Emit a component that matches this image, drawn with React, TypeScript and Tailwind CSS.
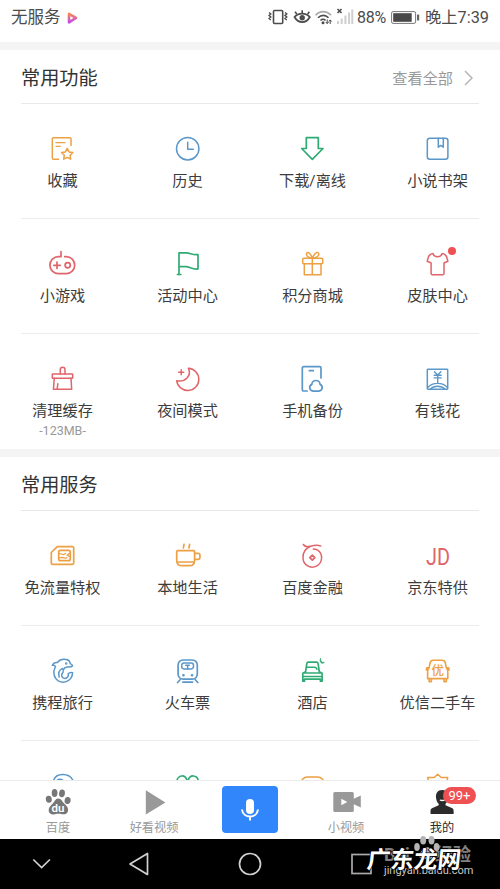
import type { ReactNode } from "react";

const BLUE = "#5b97c9";
const ORANGE = "#eda044";
const RED = "#e0656b";
const GREEN = "#2fab74";

type Item = { label: string; color: string; icon: ReactNode; note?: string; dot?: boolean };

const FEATURES: Item[][] = [
  [
    {
      label: "收藏",
      color: ORANGE,
      icon: (
        <>
          <path d="M24.5 12.5V6a1.3 1.3 0 0 0-1.3-1.3H7.1A1.3 1.3 0 0 0 5.8 6v19a1.3 1.3 0 0 0 1.3 1.3h5" />
          <path d="M9.5 9.7h9M9.5 13.3h4.3" strokeWidth="1.3" />
          <path d="M20.7 15.4l1.8 3.5 3.9.6-2.8 2.8.6 3.9-3.5-1.8-3.5 1.8.6-3.9-2.8-2.8 3.9-.6z" />
        </>
      ),
    },
    {
      label: "历史",
      color: BLUE,
      icon: (
        <>
          <circle cx="16.2" cy="15.7" r="11.2" />
          <path d="M16.2 9.3v7h5.6" />
        </>
      ),
    },
    {
      label: "下载/离线",
      color: GREEN,
      icon: <path d="M9.8 4.7h12v10.8h4.7L15.8 26.3 5.2 15.5h4.6z" strokeWidth="1.7" />,
    },
    {
      label: "小说书架",
      color: BLUE,
      icon: (
        <>
          <rect x="5.8" y="5.3" width="20.6" height="21" rx="2.5" />
          <path d="M16.8 5.3v8.9l2.5-1.8 2.5 1.8V5.3" />
        </>
      ),
    },
  ],
  [
    {
      label: "小游戏",
      color: RED,
      icon: (
        <>
          <path d="M14.5 3.7v5h-2.6a8.5 8.5 0 0 0 0 17h7.8a8.5 8.5 0 0 0 0-17h-1.5" strokeWidth="1.7" />
          <path d="M7.3 17.3h6.4M10.5 14.1v6.4" strokeWidth="1.7" />
          <circle cx="21.2" cy="17.3" r="2.6" strokeWidth="1.7" />
        </>
      ),
    },
    {
      label: "活动中心",
      color: GREEN,
      icon: (
        <>
          <path d="M7.5 26.3V4.9H15c4 0 5 2.2 11.5 1.7V21c-6.5.5-8-2.3-12-2.3h-7" strokeWidth="1.7" />
          <path d="M5.8 26.5h3.7" />
        </>
      ),
    },
    {
      label: "积分商城",
      color: ORANGE,
      icon: (
        <>
          <rect x="6.2" y="10.3" width="20" height="5.4" rx="1" />
          <path d="M7.8 15.7v11h16.7v-11M15.8 10.3v16.4" />
          <path d="M15.8 10.2c-2.5 0-5.8-1.5-5.8-4s3-3.3 5.8 4zM15.8 10.2c2.5 0 6.5-1.5 6.5-4s-3.3-3.3-6.5 4z" />
        </>
      ),
    },
    {
      label: "皮肤中心",
      color: RED,
      dot: true,
      icon: (
        <path d="M11.5 5.5c.9 4.2 8.2 4.2 9.1 0 2.6.4 3.9 1.6 4.500 3.300l1.300 4.400-3.900 1.800v10.400a1.300 1.300 0 0 1-1.300 1.300H10.900a1.300 1.300 0 0 1-1.300-1.300V15l-3.900-1.800L7 8.800c.6-1.700 1.900-2.900 4.500-3.300z" />
      ),
    },
  ],
  [
    {
      label: "清理缓存",
      color: RED,
      note: "-123MB-",
      icon: (
        <>
          <path d="M13.8 11V6.5a2.35 2.35 0 0 1 4.7 0V11" />
          <rect x="5.8" y="11" width="20.4" height="4.3" rx="0.6" />
          <path d="M7.8 15.3l-.9 11h18.3l-.7-11M10.7 25.8l.6-5" />
        </>
      ),
    },
    {
      label: "夜间模式",
      color: RED,
      icon: (
        <>
          <path d="M16.9 5.3A11.1 11.1 0 1 1 5.2 17.7c8.5 1.8 15.2-4.900 11.700-12.400z" />
          <path d="M7.2 9.3h5M9.7 6.8v5" />
        </>
      ),
    },
    {
      label: "手机备份",
      color: BLUE,
      icon: (
        <>
          <path d="M24.5 15V5a1.3 1.3 0 0 0-1.3-1.3H7.1A1.3 1.3 0 0 0 5.8 5v21.7A1.3 1.3 0 0 0 7.1 28h3.6M12.8 7.7h4" strokeWidth="1.7" />
          <path d="M16.5 28.1a3.500 3.500 0 0 1-1.200-6.700c.5-5.200 7.800-5.200 8.300 0a3.500 3.500 0 0 1-1.200 6.700z" strokeWidth="1.7" />
        </>
      ),
    },
    {
      label: "有钱花",
      color: BLUE,
      icon: (
        <>
          <rect x="5.8" y="6.3" width="20.4" height="20" rx="0.7" />
          <path d="M13 8.8l3.200 3.300 3.200-3.300M12.700 12.200h7M12.700 14.900h7M16.200 12v8M6.200 24.500c5-5.500 15-5.500 19.700 0M9 26c3-3.700 11-3.700 14.300 0" strokeWidth="1.4" />
        </>
      ),
    },
  ],
];

const SERVICES: Item[][] = [
  [
    {
      label: "免流量特权",
      color: ORANGE,
      icon: (
        <g transform="translate(0 -1)">
          <path d="M10.8 7.7h15a1.400 1.400 0 0 1 1.400 1.400v14.800a1.400 1.400 0 0 1-1.400 1.400H6.200a1.400 1.400 0 0 1-1.400-1.400V13.500z" strokeWidth="1.7" />
          <rect x="12.2" y="11.3" width="11.6" height="10.4" rx="1.8" strokeWidth="1.7" />
          <path d="M12.5 14.3l4.500 1.400 2-1.200M23.500 14l-3 2.300 3 1.300M12.500 18.800l3.700-.4 2.500.9 1.500-.7" strokeWidth="1.2" />
        </g>
      ),
    },
    {
      label: "本地生活",
      color: ORANGE,
      icon: (
        <g transform="translate(0 -1)" strokeWidth="1.7">
          <path d="M6.3 11.7h15.800a1 1 0 0 1 1 1v8.200c0 3.600-2.200 5.800-5.200 5.800h-7.500c-3 0-5.200-2.200-5.200-5.800v-8.200a1 1 0 0 1 1.100-1zM7 23h14.500" />
          <path d="M23.2 14.3h3.500a1.700 1.700 0 0 1 1.700 1.700v2.600a1.700 1.700 0 0 1-1.700 1.700h-3.500M12.500 5.300l-.6 3.600M18.100 5.300l-.6 3.600" />
        </g>
      ),
    },
    {
      label: "百度金融",
      color: RED,
      icon: (
        <g transform="translate(0 -1)">
          <path d="M6.8 5.5c1.500 2.300 4.200 2.600 7.400 1.700 3.500-1 6.500-1.500 10-.3" />
          <path d="M13.5 7.5C9.500 9.200 6.500 13 6.500 18.500a9.300 9.300 0 1 0 14.700-7.300c-1.400-.9-2.800-1.300-4.400-1.300" />
          <path d="M15.8 16.2l2.500 2.500-2.500 2.500-2.500-2.500z" strokeWidth="1.7" />
        </g>
      ),
    },
    {
      label: "京东特供",
      color: RED,
      icon: (
        <text x="4.6" y="24.7" fontSize="24" fontFamily="Roboto" textLength="24" lengthAdjust="spacingAndGlyphs" fill="currentColor" stroke="none">
          JD
        </text>
      ),
    },
  ],
  [
    {
      label: "携程旅行",
      color: BLUE,
      icon: (
        <>
          <path d="M6 10.3c.8-2.300 2.600-3 4.900-2.800C13 4.700 16.500 4 19.800 4.600c2.400.5 3.700 2 3.900 4 1.300.5 2.300 1.300 2.300 2.400-1 1.200-3.500 1-5.500.9-2 .3-3 1.200-3.400 2.600" />
          <path d="M6 10.300c1.400-.2 2.500.1 3 1.200-3 5.500-1.700 11.500 2.700 14.300 5.700 3.200 14 .2 14.400-8.100-1.700-.6-3.200-.2-4.400 1 .7 2.500-1 4.700-3.400 4.700-3.200 0-4.200-4-1.800-6 .8-1.400.5-2.800-.5-4-3.200 1.600-4.400 5-3.300 8.600" />
          <circle cx="19.7" cy="8.5" r=".5" />
        </>
      ),
    },
    {
      label: "火车票",
      color: BLUE,
      icon: (
        <>
          <rect x="6.6" y="5" width="19.2" height="19.2" rx="5" strokeWidth="1.7" />
          <rect x="10.2" y="7.9" width="11.8" height="6" rx="2.3" />
          <path d="M14.3 10.2h3.500M16.100 10.200v3.500" />
          <path d="M11.9 20.3h.1M20.500 20.300h.1" strokeWidth="2.6" />
          <path d="M8.6 24.7l-2.500 2.800M23.800 24.700l2.500 2.800M11.300 27.100h9.800" strokeWidth="1.7" />
        </>
      ),
    },
    {
      label: "酒店",
      color: GREEN,
      icon: (
        <>
          <path d="M6.3 26.2v-7.900l2.800-1.600 1.200-8a1.700 1.700 0 0 1 1.700-1.500h7.900a1.700 1.700 0 0 1 1.700 1.500l1.200 8 2.800 1.600v7.900h-1.700v-2H8v2zM6.500 18h19M6.500 21.500h19" strokeWidth="1.7" />
          <path d="M10.7 12.3h7.500c1.400.1 2 .8 2.300 1.900" />
          <path d="M24 3.5c-.3 2.300 1 4.100 3.900 4-2.700 2.200-5.500-.8-3.900-4z" fill="currentColor" strokeWidth="0.7" />
        </>
      ),
    },
    {
      label: "优信二手车",
      color: ORANGE,
      icon: (
        <>
          <path d="M7.6 12.8l1-5.100c.4-1.700 1.500-2.400 3.200-2.400h8.800c1.700 0 2.800.7 3.200 2.400l1 5.100c1.100 1 1.500 2.300 1.500 4v6.800H6.100v-6.800c0-1.700.4-3 1.500-4zM7.600 23.800v2.800h2.300v-2.800M22.500 23.800v2.800h2.300v-2.800M7.400 12.800H5.200l-.4 2 1.500.8M25 12.800h2.200l.4 2-1.500.8" strokeWidth="1.6" />
          <text x="16.2" y="20.2" fontSize="12.5" fontWeight="500" textAnchor="middle" fill="currentColor" stroke="none">
            优
          </text>
        </>
      ),
    },
  ],
  // only the top edge of this row shows above the tab bar
  [
    { label: "", color: BLUE, icon: <path d="M7 10.5C9.500 3 22.500 2.300 26.500 10.500M10.500 10.500c1.500-1.500 3.500-1.500 5.500-.5" /> },
    {
      label: "",
      color: GREEN,
      icon: <path d="M5.3 12.5c0-8.500 9.900-8.500 10.200-1.200M16.700 11.300c.3-7.300 10-7.300 10.200 1.200" strokeWidth="1.7" />,
    },
    { label: "", color: ORANGE, icon: <rect x="4.8" y="7" width="22.5" height="20" rx="6" strokeWidth="1.7" /> },
    {
      label: "",
      color: ORANGE,
      icon: <path d="M7.5 14L6.200 7.500h6.500l3.500-3.200 3.500 3.200h6.500L25 14" />,
    },
  ],
];

function Grid({ rows }: { rows: Item[][] }) {
  return (
    <div className="-mt-px">
      {rows.map((row, i) => (
        <div key={i} className="relative flex h-[115px]">
          {i > 0 && <div className="absolute inset-x-[21px] top-0 h-px bg-[#ececec]" />}
          {row.map((item, j) => (
            <div key={j} className="flex w-1/4 flex-col items-center pt-[30px]">
              <div className="relative">
                <svg
                  width="32"
                  height="32"
                  viewBox="0 0 32 32"
                  fill="none"
                  stroke="currentColor"
                  strokeWidth="1.5"
                  strokeLinecap="round"
                  strokeLinejoin="round"
                  className="-translate-x-[0.5px] overflow-visible"
                  style={{ color: item.color }}
                >
                  {item.icon}
                </svg>
                {item.dot && <span className="absolute -top-px left-[26px] size-2 rounded-full bg-[#ef5052]" />}
              </div>
              <span className="mt-1 text-[15.2px] leading-6 whitespace-nowrap text-[#3c3c3c]">{item.label}</span>
              {item.note && <span className="text-[12.5px] leading-4 text-[#999]">{item.note}</span>}
            </div>
          ))}
        </div>
      ))}
    </div>
  );
}

function StatusBar() {
  return (
    <header className="flex h-[42px] items-start justify-between px-[11px] pt-[6px] text-[#4c4c4c]">
      <div className="flex items-center">
        <span className="text-[16.5px] leading-6">无服务</span>
        <svg width="11" height="12" viewBox="0 0 11 12" className="ml-[6px]">
          <defs>
            <linearGradient id="play" x1="0" y1="0" x2="0" y2="1">
              <stop offset="0" stopColor="#f58a52" />
              <stop offset="1" stopColor="#c44ce8" />
            </linearGradient>
          </defs>
          <path d="M2 1.8l7 4-7 4.5z" fill="#fff" stroke="url(#play)" strokeWidth="2.6" strokeLinejoin="round" />
        </svg>
      </div>
      <div className="flex items-center">
        <svg width="86" height="18" viewBox="0 0 86 18" fill="none" stroke="currentColor" className="-mt-[2px]">
          {/* vibrate */}
          <rect x="5.5" y="2.5" width="9.2" height="13" rx="1" strokeWidth="1.6" />
          <path d="M1 4.5l1.800 1.500L1 7.500 2.800 9 1 10.500 2.800 12M17 4.500l1.800 1.500L17 7.500 18.800 9 17 10.500l1.800 1.500" strokeWidth="1.4" />
          {/* eye */}
          <path d="M26.5 9c4 6.800 11.500 6.800 15.300 0-4-4.500-11.300-4.500-15.300 0z" strokeWidth="1.8" />
          <circle cx="34.2" cy="9.8" r="2.7" fill="currentColor" stroke="none" />
          <path d="M28.8 6L27 3.800M34.200 5V2.200M39.600 6l1.800-2.200" strokeWidth="1.6" />
          {/* wifi */}
          <path d="M47.5 7.2c4.500-4.800 11-4.800 15.500 0" stroke="#a8a8a8" strokeWidth="1.6" />
          <path d="M50 9.8c3.200-3.200 7.500-3.200 10.500 0M52.500 12.500c1.600-1.600 3.600-1.600 5 0" strokeWidth="1.6" />
          <circle cx="55" cy="14.8" r="1.5" fill="currentColor" stroke="none" />
          <path d="M59.2 11.5v4M57.800 14l1.400 1.600 1.400-1.600M62.200 16v-4M60.800 13.500l1.400-1.600 1.400 1.600" strokeWidth="1" />
          {/* signal */}
          <path d="M69.5 1l4 4M73.500 1l-4 4" strokeWidth="1.6" />
          <path d="M70 13v3M73.700 10.500V16M77.400 7.500V16M81.100 4.500V16M84.300 1.500V16" stroke="#cfcfcf" strokeWidth="2" />
        </svg>
        <span className="ml-[3px] font-[Roboto] text-base leading-6 tracking-[-0.2px]">88%</span>
        <svg width="29" height="13" viewBox="0 0 29 13" className="-mt-[2px] ml-[5px]">
          <rect x=".6" y=".6" width="24" height="11.8" rx="1.5" fill="none" stroke="#777" strokeWidth="1" />
          <rect x="2.2" y="2.2" width="18.5" height="8.6" fill="#484848" />
          <rect x="26" y="3.5" width="2.2" height="6" rx=".5" fill="#666" />
        </svg>
        <span className="ml-[5px] text-[16.3px] leading-6 whitespace-nowrap">晚上7:39</span>
      </div>
    </header>
  );
}

function Section({ title, more, rows }: { title: string; more?: string; rows: Item[][] }) {
  return (
    <section className="border-t-8 border-[#f4f4f4] pb-px">
      <div className="mx-[21px] flex h-[54px] items-center justify-between border-b border-[#e8e8e8] pt-[5px]">
        <h2 className="text-[19.2px] text-[#333]">{title}</h2>
        {more && (
          <div className="flex items-center gap-[11px] pr-[6px] text-[15.2px] text-[#999]">
            {more}
            <svg width="9" height="16" viewBox="0 0 9 16" fill="none" stroke="#b5b5b5" strokeWidth="1.5" className="-mt-[2px]">
              <path d="M1 1l7 7-7 7" />
            </svg>
          </div>
        )}
      </div>
      <Grid rows={rows} />
    </section>
  );
}

function Tab({ label, active, children }: { label: string; active?: boolean; children: ReactNode }) {
  return (
    <div className={`relative flex w-24 flex-col items-center pt-[5px] ${active ? "text-[#2b2b2b]" : "text-[#999]"}`}>
      <svg width="32" height="32" viewBox="0 0 32 32" fill="currentColor">
        {children}
      </svg>
      <span className="mt-px text-[12.2px] leading-[19px]">{label}</span>
      {active && (
        <span className="absolute top-[6px] left-[49px] flex h-[17px] w-[33px] items-center justify-center rounded-full bg-[#ef5052] text-[13px] text-white">
          99+
        </span>
      )}
    </div>
  );
}

function TabBar() {
  return (
    <nav className="flex h-[59px] justify-center border-t border-[#ebebeb] bg-white">
      <Tab label="百度">
        <g fill="#777">
          <ellipse cx="6.8" cy="13.3" rx="3" ry="3.5" transform="rotate(-10 6.8 13.3)" />
          <ellipse cx="12.6" cy="7" rx="2.9" ry="3.9" />
          <ellipse cx="20" cy="7.3" rx="2.9" ry="3.9" transform="rotate(8 20 7.3)" />
          <ellipse cx="25.6" cy="14.5" rx="3" ry="3.5" transform="rotate(10 25.6 14.5)" />
          <path d="M16.2 12.5c3 0 4 3 6 5 3 2.500 4.500 5 3.700 7.700-.8 3-3.500 3.500-6 3-2.300-.5-4.700-.5-7 0-3 .6-5.700-.2-6.200-3.200-.4-2.700 1.400-5 3.800-7.200 2-2 2.800-5.300 5.700-5.300z" />
        </g>
        <text x="16" y="26.3" fontSize="11.5" fontWeight="600" fontFamily="Roboto" textAnchor="middle" fill="#fff">
          du
        </text>
      </Tab>
      <Tab label="好看视频">
        <path d="M7.8 4.3v24.200L27.400 16.400z" fill="#999" />
      </Tab>
      <div className="flex w-24 justify-center pt-[5px]">
        <button className="flex h-[47px] w-14 items-center justify-center rounded bg-[#3286fc]">
          <svg width="20" height="26" viewBox="0 0 20 26" fill="none" stroke="#fff" strokeWidth="2">
            <rect x="6" y="2" width="8" height="15" rx="4" fill="#fff" stroke="none" />
            <path d="M2 12.5c1 9.300 15 9.300 16 0M10 19.500v4" />
          </svg>
        </button>
      </div>
      <Tab label="小视频">
        <path d="M4.8 6h17.500a1.500 1.500 0 0 1 1.500 1.500v5.300l7-3.300v12l-7-3.300v6.300a1.500 1.500 0 0 1-1.500 1.500H4.800a1.500 1.500 0 0 1-1.500-1.500v-17A1.500 1.500 0 0 1 4.800 6z" fill="#999" />
        <path d="M11.3 12.8v6.500l6-3.200z" fill="#fff" />
      </Tab>
      <Tab label="我的" active>
        <path d="M16.2 4c4.500 0 6.300 3.500 6 7.500-.3 3-1.300 5-2.700 6.300v1.500l6.300 2.800c1.500.7 1.800 1.500 1.800 3V28H4.500v-2.900c0-1.500.5-2.300 2-3l6.200-2.800v-1.500c-1.500-1.300-2.400-3.300-2.700-6.300-.3-4 1.500-7.500 6.200-7.500z" />
        <path d="M13.8 14c2 .8 3.400.7 5 0" stroke="#fff" strokeWidth="1.3" fill="none" />
      </Tab>
    </nav>
  );
}

function SystemBar() {
  return (
    <footer className="relative h-[50px] bg-black">
      <svg width="500" height="50" viewBox="0 0 500 50" fill="none" stroke="#d0d0d0" strokeWidth="1.7">
        <path d="M33.3 20.5l8.300 8 8.300-8" />
        <path d="M147.5 14.5v21L130 25z" strokeLinejoin="round" />
        <circle cx="250" cy="25" r="10.5" />
        <rect x="352" y="15.5" width="19" height="19" stroke="#aaa" />
      </svg>
      {/* watermark */}
      <div className="absolute top-[7px] left-[384px] flex w-[87px] justify-between text-[18px] leading-[18px] font-bold text-[#808080]">
        <span className="font-[Roboto]">Bai</span>
        <span>经验</span>
      </div>
      <span className="absolute top-[24px] left-[384px] font-[Roboto] text-[11px] leading-4 text-[#c8c8c8]">
        jingyan.baidu.com
      </span>
      <svg width="28" height="32" viewBox="0 0 28 32" className="absolute -top-[3px] left-[413px]" fill="#b4b4b4">
        <ellipse cx="4" cy="11" rx="2.8" ry="4" />
        <ellipse cx="10.2" cy="4.3" rx="3" ry="4.2" />
        <ellipse cx="18.5" cy="4.3" rx="3" ry="4.2" />
        <ellipse cx="23.5" cy="11" rx="2.8" ry="4" />
        <path d="M14 11c5 1 8 6 8 10 0 3-13 3-16 0 0-4 4-9 8-10z" />
      </svg>
      <span className="absolute top-[6px] left-[367px] -skew-x-6 text-[23.5px] leading-[30px] font-bold whitespace-nowrap text-white [-webkit-text-stroke:1.5px_#000] [paint-order:stroke_fill]">
        广东龙网
      </span>
    </footer>
  );
}

export default function App() {
  return (
    <div className="flex h-[889px] w-[500px] flex-col overflow-hidden bg-white font-['Roboto','Noto_Sans_CJK_SC',sans-serif]">
      <StatusBar />
      <main className="min-h-0 flex-1 overflow-hidden">
        <Section title="常用功能" more="查看全部" rows={FEATURES} />
        <Section title="常用服务" rows={SERVICES} />
      </main>
      <TabBar />
      <SystemBar />
    </div>
  );
}
